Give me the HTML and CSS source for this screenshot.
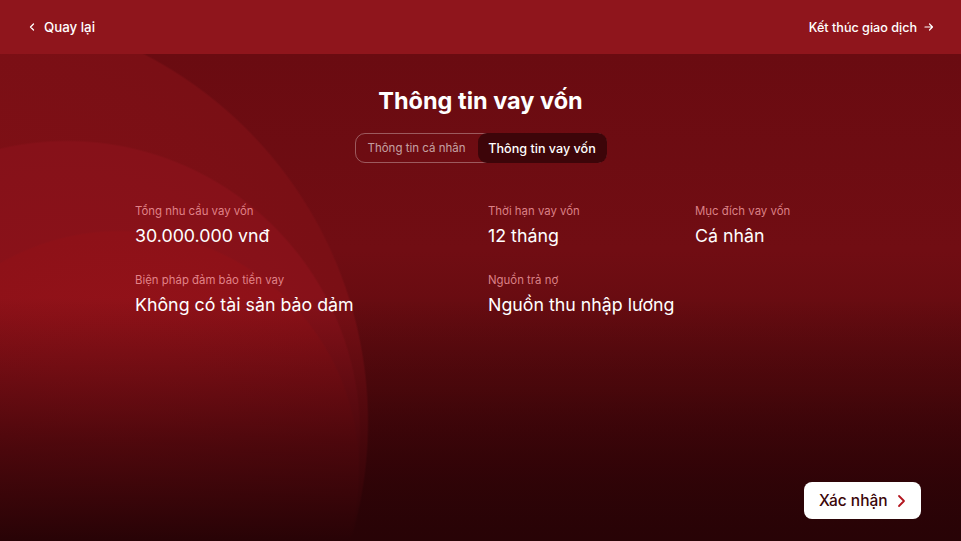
FILE: index.html
```html
<!DOCTYPE html>
<html lang="vi">
<head>
<meta charset="utf-8">
<title>Thông tin vay vốn</title>
<link rel="stylesheet" href="styles.css">
</head>
<body>
<div class="app">
  <header class="topbar">
    <a class="nav-link" href="#">
      <svg class="ico-back" width="6" height="8" viewBox="0 0 6 8"><path d="M4.5 1 L1.5 4 L4.5 7" fill="none" stroke="#fff" stroke-width="1.3" stroke-linecap="round" stroke-linejoin="round"/></svg>
      <span>Quay lại</span>
    </a>
    <a class="nav-link nav-link-end" href="#">
      <span>Kết thúc giao dịch</span>
      <svg class="ico-next" width="10" height="10" viewBox="0 0 10 10"><path d="M1 5 H8.5 M5.5 2 L8.5 5 L5.5 8" fill="none" stroke="#fff" stroke-width="1.2" stroke-linecap="round" stroke-linejoin="round"/></svg>
    </a>
  </header>
  <main class="content">
    <h1 class="title">Thông tin vay vốn</h1>
    <div class="tabs">
      <div class="tab">Thông tin cá nhân</div>
      <div class="tab tab-active">Thông tin vay vốn</div>
    </div>
    <div class="info-grid">
      <div class="field">
        <div class="label">Tổng nhu cầu vay vốn</div>
        <div class="value">30.000.000 vnđ</div>
      </div>
      <div class="field">
        <div class="label">Thời hạn vay vốn</div>
        <div class="value">12 tháng</div>
      </div>
      <div class="field">
        <div class="label">Mục đích vay vốn</div>
        <div class="value">Cá nhân</div>
      </div>
      <div class="field">
        <div class="label">Biện pháp đảm bảo tiền vay</div>
        <div class="value">Không có tài sản bảo dảm</div>
      </div>
      <div class="field">
        <div class="label">Nguồn trả nợ</div>
        <div class="value">Nguồn thu nhập lương</div>
      </div>
    </div>
    <div class="actions">
      <button class="btn-confirm">
        <span>Xác nhận</span>
        <svg width="9" height="14" viewBox="0 0 9 14"><path d="M2 2 L7 7 L2 12" fill="none" stroke="#b3161f" stroke-width="1.8" stroke-linecap="round" stroke-linejoin="round"/></svg>
      </button>
    </div>
  </main>
</div>
</body>
</html>
```

FILE: styles.css
```css
* { box-sizing: border-box; }
html, body {
  margin: 0;
  padding: 0;
  width: 961px;
  height: 541px;
  overflow: hidden;
}
body {
  font-family: "Inter", "Noto Sans", sans-serif;
  color: #fff;
  background: #2a0306;
}
.app {
  width: 961px;
  height: 541px;
  display: flex;
  flex-direction: column;
}
.topbar {
  height: 54px;
  flex: none;
  display: flex;
  align-items: center;
  justify-content: space-between;
  padding: 0 27px 0 29px;
  background: #8f151c;
  box-shadow: 0 1px 0 rgba(0,0,0,0.08);
}
.nav-link {
  display: flex;
  align-items: center;
  gap: 9px;
  color: #fff;
  text-decoration: none;
  font-size: 13.3px;
  font-weight: 500;
}
.nav-link-end {
  gap: 7px;
  font-size: 12.6px;
}
.content {
  flex: 1;
  display: flex;
  flex-direction: column;
  align-items: center;
  background:
    linear-gradient(180deg, rgba(42,3,6,0) 0%, rgba(42,3,6,0) 50%, rgba(48,3,7,0.7) 80%, rgba(40,3,6,1) 100%),
    radial-gradient(circle 240px at 120px 416px, #98131a 0, #8e1118 238px, rgba(0,0,0,0) 240px),
    radial-gradient(circle 294px at 67px 380px, #8f1219 0, #861119 292px, rgba(0,0,0,0) 294px),
    radial-gradient(circle 415px at -46px 368px, #831016 0, #7a0f15 413px, rgba(0,0,0,0) 415px),
    linear-gradient(180deg, #6a0b11 0%, #710d13 40%, #5a0a0e 70%, #2a0306 100%);
}
.title {
  margin: 33px 0 0;
  font-size: 23.5px;
  line-height: 28px;
  font-weight: 700;
}
.tabs {
  margin-top: 18px;
  height: 30px;
  width: 252px;
  display: flex;
  align-items: stretch;
  border: 1px solid rgba(255,255,255,0.32);
  border-radius: 10px;
}
.tab {
  flex: 1;
  display: flex;
  align-items: center;
  justify-content: center;
  font-size: 11.5px;
  color: rgba(255,255,255,0.62);
}
.tab-active {
  flex: none;
  width: 129px;
  margin: -1px -1px -1px 0;
  background: #3d0509;
  border-radius: 9px;
  color: #fff;
  font-size: 12.6px;
  font-weight: 500;
}
.info-grid {
  align-self: stretch;
  margin-top: 41px;
  padding-left: 135px;
  display: grid;
  grid-template-columns: 353px 207px 1fr;
  row-gap: 25px;
}
.field {
  display: flex;
  flex-direction: column;
  gap: 6px;
}
.label {
  font-size: 11.4px;
  line-height: 14px;
  color: rgba(255,170,175,0.75);
}
.value {
  font-size: 17.8px;
  line-height: 24px;
  color: #fff;
}
.actions {
  align-self: stretch;
  margin-top: auto;
  display: flex;
  justify-content: flex-end;
  padding: 0 40px 22px 0;
}
.btn-confirm {
  width: 117px;
  height: 37px;
  border: none;
  border-radius: 8px;
  background: #fff;
  display: flex;
  align-items: center;
  gap: 9px;
  padding: 0 0 0 15px;
  font-family: "Inter", "Noto Sans", sans-serif;
  font-size: 15.5px;
  font-weight: 500;
  color: #3a0508;
  cursor: pointer;
}
```
